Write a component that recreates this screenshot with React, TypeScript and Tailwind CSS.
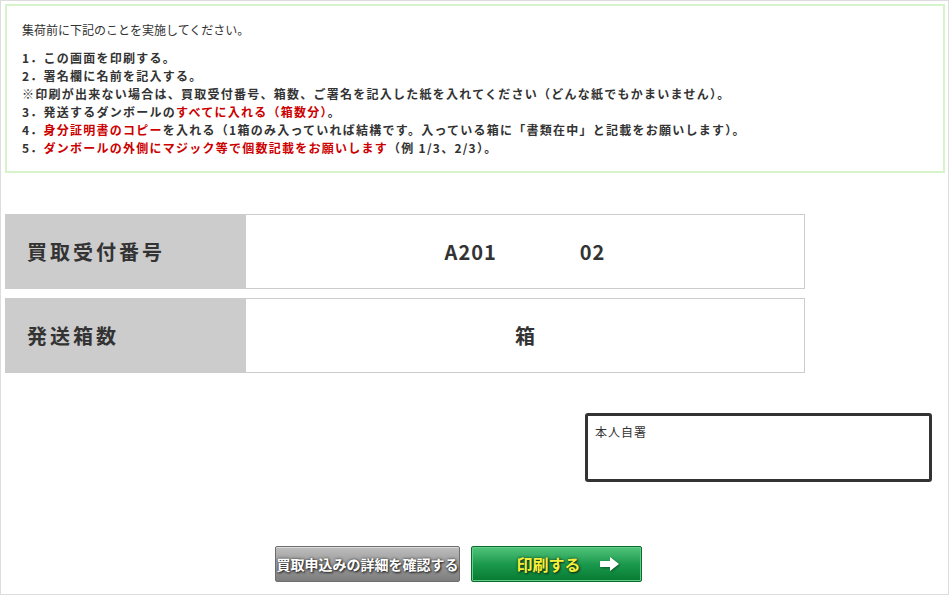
const jp = { fontFamily: '"Noto Sans CJK JP", "Noto Sans", sans-serif' };

function Red({ children }: { children: React.ReactNode }) {
  return <span className="text-[#cc0000]">{children}</span>;
}

function InfoRow({ label, children }: { label: string; children: React.ReactNode }) {
  return (
    <div className="flex h-[75px] w-[800px] border border-[#cccccc]">
      <div className="flex w-[240px] items-center bg-[#cccccc] pl-[21px] text-[20px] font-bold tracking-[3px] text-[#333]">
        {label}
      </div>
      <div className="flex flex-1 items-center justify-center bg-white text-[20px] font-bold text-[#333]">
        {children}
      </div>
    </div>
  );
}

export default function App() {
  return (
    <div className="h-[595px] w-[949px] border border-[#dddddd] bg-white pl-[4px] pt-[3px]" style={jp}>
      <div className="h-[169px] w-[940px] border-2 border-[#d6f3cb] px-[15px] pt-[15px] text-[12px] leading-[18px] text-[#333]">
        <p>集荷前に下記のことを実施してください。</p>
        <ul className="mt-[10px] font-bold tracking-[1.25px]">
          <li>1．この画面を印刷する。</li>
          <li>2．署名欄に名前を記入する。</li>
          <li>※印刷が出来ない場合は、買取受付番号、箱数、ご署名を記入した紙を入れてください（どんな紙でもかまいません）。</li>
          <li>3．発送するダンボールの<Red>すべてに入れる（箱数分）</Red>。</li>
          <li>4．<Red>身分証明書のコピー</Red>を入れる（1箱のみ入っていれば結構です。入っている箱に「書類在中」と記載をお願いします）。</li>
          <li>5．<Red>ダンボールの外側にマジック等で個数記載をお願いします</Red>（例 1/3、2/3）。</li>
        </ul>
      </div>

      <div className="mt-[41px] flex flex-col gap-[9px]">
        <InfoRow label="買取受付番号">
          <div className="flex gap-[83px] tracking-[1px]">
            <span>A201</span>
            <span>02</span>
          </div>
        </InfoRow>
        <InfoRow label="発送箱数">
          <span>箱</span>
        </InfoRow>
      </div>

      <div className="mt-[40px] flex justify-start pl-[580px]">
        <div className="h-[69px] w-[347px] rounded-[3px] border-[3px] border-[#333] px-[7px] pt-[7px] text-[12px] tracking-[1px] text-[#333]">
          本人自署
        </div>
      </div>

      <div className="mt-[64px] flex gap-[11px] pl-[270px]">
        <button className="flex h-[36px] w-[185px] items-center justify-center rounded-[2px] border border-[#6e6e6e] bg-gradient-to-b from-[#bdbdbd] via-[#9c9c9c] to-[#7d7d7d] text-[14px] font-bold text-white shadow-[inset_0_1px_0_#dcdcdc] [text-shadow:0_0_3px_#333,1px_1px_2px_#222]">
          買取申込みの詳細を確認する
        </button>
        <button className="flex h-[36px] w-[171px] items-center justify-center gap-[19px] rounded-[2px] border border-[#0b6b2d] bg-gradient-to-b from-[#4fc47a] via-[#1a9a4e] to-[#077a30] pl-[22px] text-[16px] font-bold text-[#f7f03a] shadow-[inset_0_0_0_1px_#66cc8a] [text-shadow:0_0_3px_#14401f,1px_1px_2px_#0b2a12]">
          <span>印刷する</span>
          <svg width="19" height="14" viewBox="0 0 19 14" className="drop-shadow-[1px_1px_1px_rgba(0,0,0,0.4)]">
            <polygon points="0,4 10,4 10,0 19,7 10,14 10,10 0,10" fill="#ffffff" />
          </svg>
        </button>
      </div>
    </div>
  );
}
